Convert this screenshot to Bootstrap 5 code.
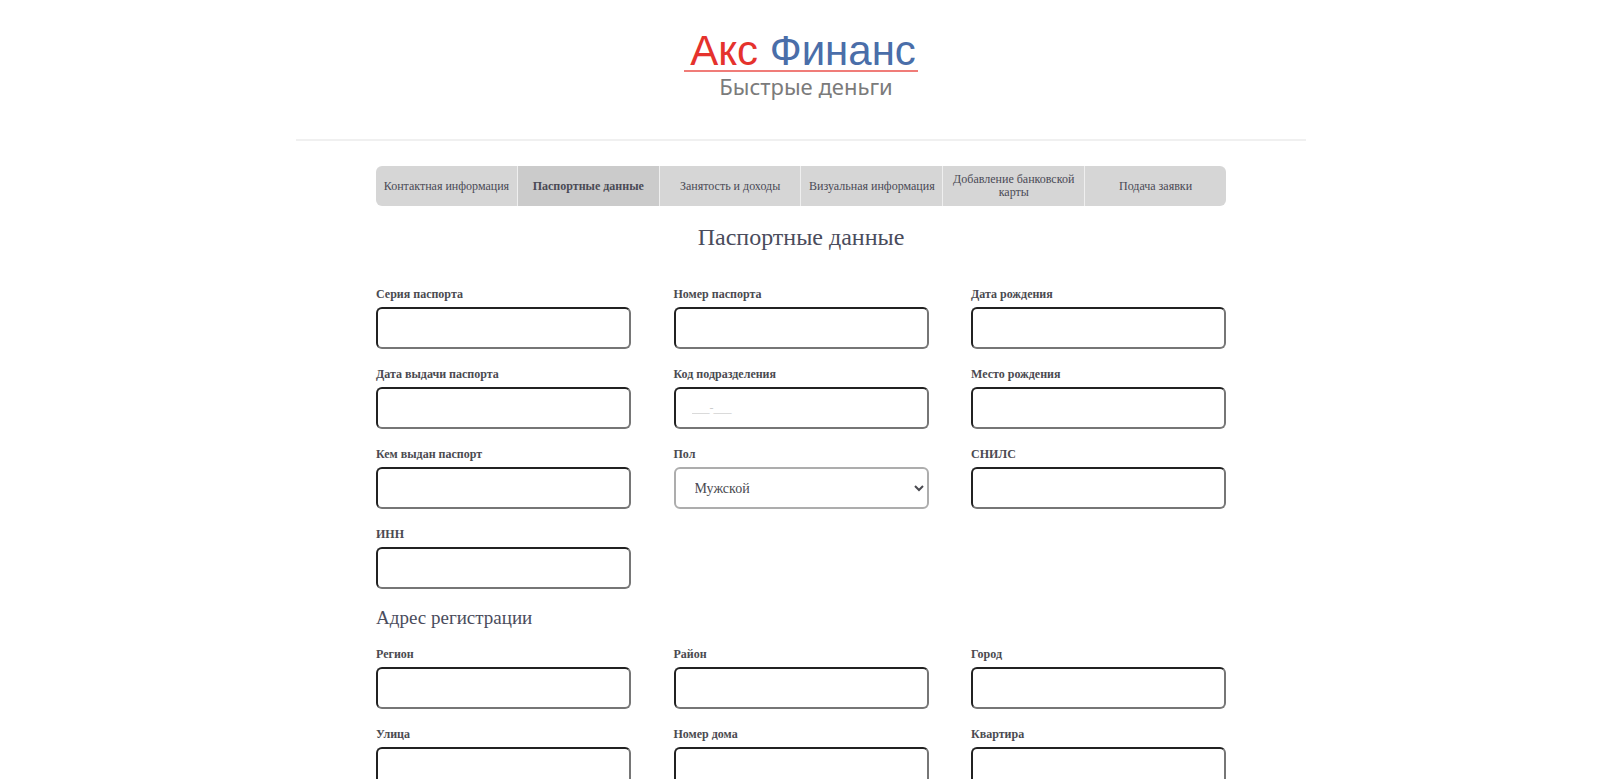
<!DOCTYPE html>
<html lang="ru">
<head>
<meta charset="utf-8">
<meta name="viewport" content="width=device-width, initial-scale=1">
<title>Акс Финанс</title>
<link href="https://cdn.jsdelivr.net/npm/bootstrap@5.3.0/dist/css/bootstrap.min.css" rel="stylesheet">
<style>
body { font-family: "Liberation Serif", serif; color: #4a4c5c; background: #fff; padding-left: 2px; }
.page { max-width: 1010px; }
.site-head { height: 141px; border-bottom: 2px solid #f0f0f0; padding-top: 32px; margin-bottom: 25px; }
.brand { width: 234px; font-family: "Liberation Sans", sans-serif; }
.brand-name { font-size: 42px; line-height: 38px; color: #4a6ea9; border-bottom: 2px solid #f07c78; white-space: nowrap; padding-left: 4px; }
.brand-name span { color: #e5322d; }
.brand-sub { font: 22px/28px "Noto Sans", sans-serif; color: #7b7b7b; white-space: nowrap; padding-left: 10px; }
.form-area { max-width: 850px; }
.steps { border-radius: 6px; background: #d6d6d6; min-height: 40px; margin-bottom: 17px; }
.steps li { flex: 1 1 0; border-right: 1px solid #efefef; }
.steps li:last-child { border-right: 0; }
.steps a { font-size: 12px; line-height: 13px; color: #4a4a55; padding: 0 5px; }
.steps a.current { background: #cbcbcb; font-weight: 700; }
h1 { font-size: 24px; line-height: 28px; margin-bottom: 36px; }
h2 { font-size: 19px; line-height: 22px; margin: 0 0 18px; }
.fields { display: grid; grid-template-columns: repeat(auto-fill, 30%); column-gap: 5%; row-gap: 18px; margin-bottom: 18px; }
.fields label { display: block; font-size: 12px; line-height: 14px; font-weight: 700; margin-bottom: 6px; color: #4a4a50; }
.fields .form-control, .fields .form-pick { display: block; width: 100%; height: 42px; border-radius: 6px; padding: 0 16px; font-size: 12px; background: #fff; }
.fields .form-control { border: 2px inset #767676; }
.fields .form-control::placeholder { color: #ccc; }
.fields .form-pick { border: 2px solid #adadad; color: #4a4a50; padding: 0 0 0 15px; font-size: 14px; }
</style>
</head>
<body>
<div class="page mx-auto">
  <header class="site-head">
    <a class="brand d-block mx-auto text-center text-decoration-none" href="#">
      <div class="brand-name"><span>Акс</span> Финанс</div>
      <div class="brand-sub">Быстрые деньги</div>
    </a>
  </header>
  <main class="form-area mx-auto">
    <nav aria-label="Шаги заявки">
      <ol class="steps list-unstyled d-flex overflow-hidden">
        <li><a class="d-flex h-100 align-items-center justify-content-center text-center text-decoration-none" href="#">Контактная информация</a></li>
        <li><a class="current d-flex h-100 align-items-center justify-content-center text-center text-decoration-none" href="#" aria-current="step">Паспортные данные</a></li>
        <li><a class="d-flex h-100 align-items-center justify-content-center text-center text-decoration-none" href="#">Занятость и доходы</a></li>
        <li><a class="d-flex h-100 align-items-center justify-content-center text-center text-decoration-none" href="#">Визуальная информация</a></li>
        <li><a class="d-flex h-100 align-items-center justify-content-center text-center text-decoration-none" href="#">Добавление банковской карты</a></li>
        <li><a class="d-flex h-100 align-items-center justify-content-center text-center text-decoration-none" href="#">Подача заявки</a></li>
      </ol>
    </nav>
    <form>
      <h1 class="text-center fw-normal">Паспортные данные</h1>
      <div class="fields">
        <div><label for="series">Серия паспорта</label><input class="form-control" id="series" type="text"></div>
        <div><label for="number">Номер паспорта</label><input class="form-control" id="number" type="text"></div>
        <div><label for="birth">Дата рождения</label><input class="form-control" id="birth" type="text"></div>
        <div><label for="issued">Дата выдачи паспорта</label><input class="form-control" id="issued" type="text"></div>
        <div><label for="code">Код подразделения</label><input class="form-control" id="code" type="text" placeholder="___-___"></div>
        <div><label for="place">Место рождения</label><input class="form-control" id="place" type="text"></div>
        <div><label for="issuer">Кем выдан паспорт</label><input class="form-control" id="issuer" type="text"></div>
        <div><label for="sex">Пол</label><select class="form-pick" id="sex"><option>Мужской</option><option>Женский</option></select></div>
        <div><label for="snils">СНИЛС</label><input class="form-control" id="snils" type="text"></div>
        <div><label for="inn">ИНН</label><input class="form-control" id="inn" type="text"></div>
      </div>
      <h2 class="fw-normal">Адрес регистрации</h2>
      <div class="fields">
        <div><label for="region">Регион</label><input class="form-control" id="region" type="text"></div>
        <div><label for="district">Район</label><input class="form-control" id="district" type="text"></div>
        <div><label for="city">Город</label><input class="form-control" id="city" type="text"></div>
        <div><label for="street">Улица</label><input class="form-control" id="street" type="text"></div>
        <div><label for="house">Номер дома</label><input class="form-control" id="house" type="text"></div>
        <div><label for="flat">Квартира</label><input class="form-control" id="flat" type="text"></div>
      </div>
    </form>
  </main>
</div>
<script src="https://cdn.jsdelivr.net/npm/bootstrap@5.3.0/dist/js/bootstrap.bundle.min.js"></script>
</body>
</html>
